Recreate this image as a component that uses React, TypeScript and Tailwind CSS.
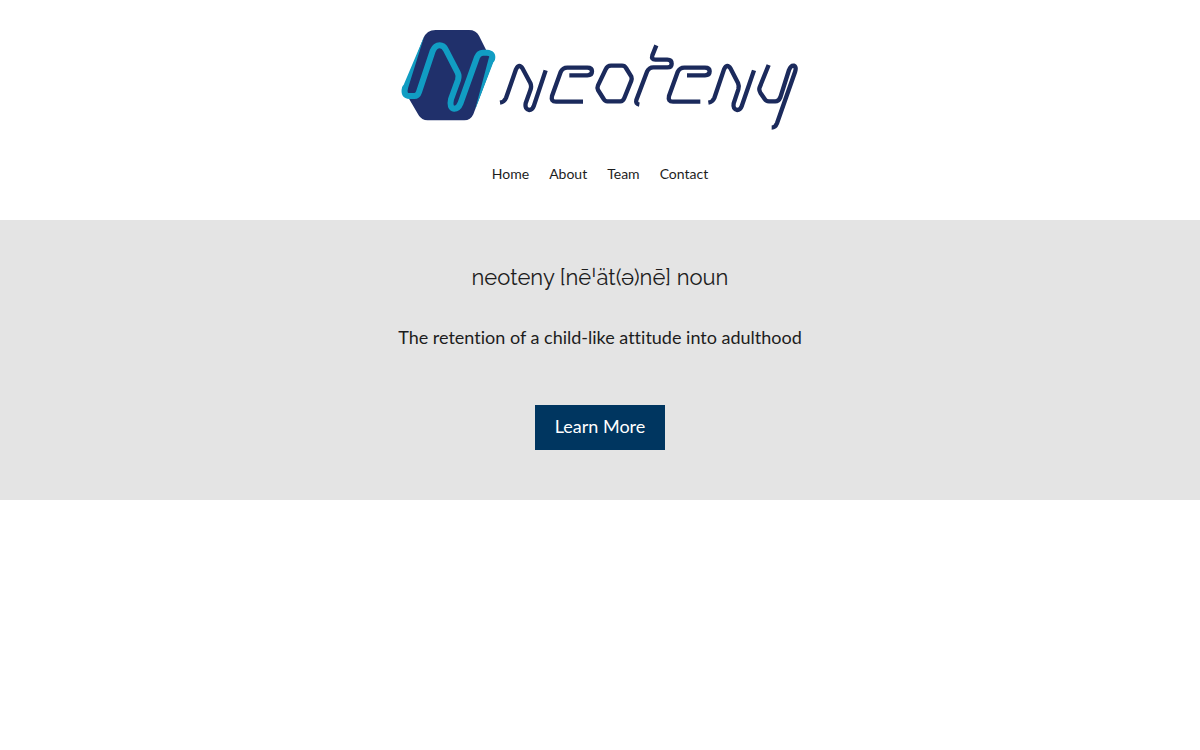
const navLinks = ['Home', 'About', 'Team', 'Contact']

function Logo() {
  return (
    <svg viewBox="0 0 1200 312" className="h-[104px] w-[400px]" fill="none" role="img" aria-label="Neoteny">
      <g transform="translate(-15 -24)" strokeLinecap="round" strokeLinejoin="round">
        <path
          fill="#20306b"
          d="M122 30H222Q243 30 252 47L276 95L294 125L235 283Q227 301 208 301H98Q80 301 71 286L42 236L28 205L85 55Q95 30 122 30Z"
        />
        <path fill="#119dc3" d="M22 204L88 48L38 208ZM299 116L240 270L282 112Z" />
        <path
          stroke="#119dc3"
          strokeWidth="18"
          d="M30 204Q24 228 44 228H58Q68 228 72 216L113 93Q120 76 134 76Q146 76 153 90L188 158Q193 168 189 180L168 238Q162 264 178 266Q190 266 196 251L246 112Q251 98 264 98H276Q296 99 291 118"
        />
      </g>
      <g stroke="#1b2a5c" strokeWidth="13" strokeLinejoin="round">
        <path d="M300 224Q313 222 318 210L348 124Q357 105 368 122L391 165Q395 174 392 184L377 226Q374 244 388 246Q397 246 401 235L437 127" />
        <path d="M508 142H562Q576 142 576 130Q576 119 562 119H502Q488 119 482 132L456 204Q452 221 468 221H549" />
        <path d="M633 113H666Q674 113 678 120L694 146Q696 152 694 158L673 210Q669 220 661 220H622Q615 220 611 213L594 186Q591 179 594 172L617 124Q622 113 633 113Z" />
        <path d="M769 52L757 82Q753 95 766 95H802Q815 95 815 107Q815 118 802 118H760Q747 118 741 131L709 216Q706 228 718 230" />
        <path d="M861 142H915Q929 142 929 130Q929 119 915 119H853Q839 119 833 132L807 204Q803 221 819 221H901" />
        <path d="M925 224Q938 222 943 210L972 124Q981 105 992 122L1014 165Q1018 174 1015 184L1001 226Q998 244 1012 246Q1021 246 1025 235L1062 127" />
        <path d="M1106 111L1079 178Q1076 186 1081 194L1094 213Q1098 220 1107 220H1126Q1136 220 1141 208L1167 126Q1173 111 1182 113Q1190 117 1185 132L1131 286Q1126 299 1115 299" />
      </g>
    </svg>
  )
}

export default function App() {
  return (
    <div className="min-h-screen bg-white font-['Lato',sans-serif] text-[#1d1d1d] [font-variant-ligatures:none]">
      <header className="flex flex-col items-center pt-7 pb-9">
        <a href="#home">
          <Logo />
        </a>
        <nav className="mt-8 flex gap-5 text-sm leading-5">
          {navLinks.map((label) => (
            <a key={label} href={`#${label.toLowerCase()}`}>
              {label}
            </a>
          ))}
        </nav>
      </header>
      <main className="flex flex-col items-center bg-[#e4e4e4] px-4 pt-[39px] pb-[50px] text-center">
        <h1 className="font-['Raleway','Lato',sans-serif] text-[22px] leading-9">neoteny [nēˈät(ə)nē] noun</h1>
        <p className="mt-7 text-lg leading-7">The retention of a child-like attitude into adulthood</p>
        <button type="button" className="mt-[54px] h-[45px] bg-[#003660] px-5 pb-1 text-lg text-white">
          Learn More
        </button>
      </main>
    </div>
  )
}
